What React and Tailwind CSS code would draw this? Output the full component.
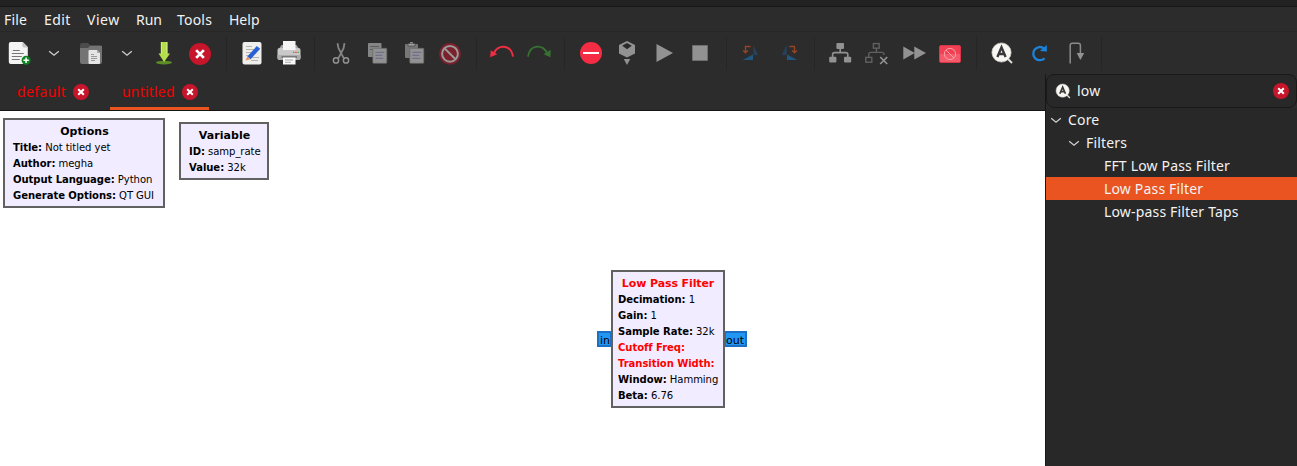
import React from "react";

function Icon({ children }) {
  return (
    <svg width="26" height="26" viewBox="0 0 26 26" fill="none" className="block shrink-0">
      {children}
    </svg>
  );
}

function Tool({ children }) {
  return <button className="flex h-full w-[36.5px] shrink-0 items-center justify-center">{children}</button>;
}

function Separator() {
  return (
    <div className="flex h-full w-[15.5px] shrink-0 items-center justify-center">
      <div className="h-[33px] w-px bg-[#262626]" />
    </div>
  );
}

function CloseBadge({ className }) {
  return (
    <svg viewBox="0 0 16 16" className={className}>
      <circle cx="8" cy="8" r="8" fill="#c7162b" />
      <path d="M5.2 5.2l5.6 5.6M10.8 5.2l-5.6 5.6" stroke="#fff" strokeWidth="2" />
    </svg>
  );
}

function Chevron({ className = "" }) {
  return (
    <svg width="12" height="8" viewBox="0 0 12 8" fill="none" className={className}>
      <path d="M1.2 2.2L6 6.2l4.8-4" stroke="#cfcfcf" strokeWidth="1.3" />
    </svg>
  );
}

function Magnifier({ className }) {
  return (
    <svg viewBox="0 0 26 26" fill="none" className={className}>
      <path d="M18 18l5 5" stroke="#deddda" strokeWidth="2" />
      <circle cx="12.5" cy="12.5" r="9.6" fill="#f8f7f3" stroke="#d0cfc4" strokeWidth=".7" />
      <path d="M8.4 17l4.1-9.6 4.1 9.6M10 14h5.2" stroke="#383838" strokeWidth="2.4" />
    </svg>
  );
}

const NewIcon = () => (
  <Icon>
    <g transform="translate(.8 0)">
      <path d="M5 2h12l5 5v15q0 2-2 2H5q-2 0-2-2V4q0-2 2-2z" fill="#f4f4f4" />
      <path d="M16.5 2v3.5q0 2 2 2H22z" fill="#c4c4c4" />
      <path d="M7 10.5h7M6 13.5h12M6 16.5h10M6 19.5h8" stroke="#777" />
      <circle cx="20.3" cy="20.3" r="4.5" fill="#0e8420" />
      <path d="M17.6 20.3H23M20.3 17.6V23" stroke="#fff" strokeWidth="1.5" />
    </g>
  </Icon>
);

const FolderIcon = () => (
  <Icon>
    <path d="M2 5q0-2 2-2h6l2 2h10q2 0 2 2v13H2z" fill="#4b4b4b" />
    <path d="M2 8h8l2-2h12v16q0 2-2 2H4q-2 0-2-2z" fill="#747474" />
    <path d="M11 10h8l3 3v10q0 1-1 1h-9.5q-1 0-1-1V11q0-1 1-1z" fill="#e5e5e5" />
    <path d="M19 10v3h3z" fill="#aaa" />
    <path d="M13 14.5h3M13 16.5h6M13 18.5h6M13 20.5h4" stroke="#999" />
  </Icon>
);

const SaveIcon = () => (
  <Icon>
    <ellipse cx="13" cy="22.6" rx="8" ry="1.8" fill="#5c8c24" />
    <path d="M9.8 2h6.6v11.5H19L13.1 22 7.5 13.5h2.3z" fill="#b4dd4b" />
    <path d="M10.5 2v12M15.9 2v12" stroke="#d3ee85" />
  </Icon>
);

const EditIcon = () => (
  <Icon>
    <rect x="3.5" y="2" width="19" height="22.5" rx="2" fill="#eeeeec" />
    <path d="M7 6.5h6M7 9.5h10M7 12.5h5M7 15.5h4M13 17.5h7M12 20.5h7" stroke="#b5b5a9" />
    <path d="M17.8 6l3.4 2.8-9.6 10.4-3.3-2.8z" fill="#2860d8" />
    <path d="M8.3 16.4l3.3 2.8-5.1 1.2z" fill="#e5955d" />
  </Icon>
);

const PrintIcon = () => (
  <Icon>
    <rect x="1.5" y="8" width="23" height="12" rx="2" fill="#c9c9c9" />
    <path d="M3.5 8h19l-2-3h-15z" fill="#a5a5a5" />
    <path d="M7 1h12.5v9H7z" fill="#f4f4f4" />
    <path d="M1.5 15h23v3q0 2-2 2h-19q-2 0-2-2z" fill="#adadad" />
    <path d="M5.5 17h15.5" stroke="#444" />
    <path d="M7 17.5h12.5v7H7z" fill="#fafafa" />
    <path d="M9 20h8M9 22.3h6" stroke="#aaa" />
    <path d="M17 12.3h1.4" stroke="#de5b3c" strokeWidth="1.3" />
    <path d="M19.3 12.3h1.4" stroke="#e83a3a" strokeWidth="1.3" />
    <path d="M21.6 12.3H23" stroke="#4aa947" strokeWidth="1.3" />
  </Icon>
);

const CutIcon = () => (
  <Icon>
    <path d="M9.5 3.2l1 5 5.2 10M16.5 3.2l-.9 5-5.2 10" stroke="#858585" strokeWidth="1.8" />
    <circle cx="8" cy="20.4" r="2.6" stroke="#929292" strokeWidth="1.5" />
    <circle cx="18" cy="20.4" r="2.6" stroke="#929292" strokeWidth="1.5" />
  </Icon>
);

const SheetLines = () => (
  <>
    <rect x="8.8" y="8.3" width="14" height="15" rx=".8" fill="#929292" stroke="#666" strokeWidth=".7" />
    <path d="M11.3 12.3h9M11.3 15.3h7M11.3 18.3h8" stroke="#68688e" />
  </>
);

const CopyIcon = () => (
  <Icon>
    <rect x="4" y="3" width="13.5" height="14" rx=".8" fill="#858585" />
    <path d="M6 6.5h9M6 9.5h5" stroke="#5d5d5d" />
    <SheetLines />
  </Icon>
);

const PasteIcon = () => (
  <Icon>
    <rect x="4" y="4" width="13" height="14" rx="1" fill="#777" />
    <path d="M7 3.5h7V6H7z" fill="#a0a0a0" stroke="#444" strokeWidth=".7" />
    <path d="M9 2.8h3" stroke="#aaa" />
    <SheetLines />
  </Icon>
);

const DeleteIcon = () => (
  <Icon>
    <circle cx="13" cy="13.8" r="10.8" fill="#7c202b" />
    <circle cx="13" cy="13.8" r="7.9" stroke="#999" strokeWidth="2" />
    <path d="M7.5 8.3l11 11" stroke="#999" strokeWidth="2" />
  </Icon>
);

const UndoIcon = () => (
  <Icon>
    <path d="M5.2 13C8 4.5 22 3.5 24 16.7" stroke="#ed2e43" strokeWidth="1.9" />
    <path d="M1.8 10.2l-.7 7 7.2-3z" fill="#ed2e43" />
  </Icon>
);

const RedoIcon = () => (
  <Icon>
    <path d="M20.8 13C18 4.5 4 3.5 2 16.7" stroke="#377231" strokeWidth="1.8" />
    <path d="M24.7 9.7l-.3 7.5-6.8-3z" fill="#377231" />
  </Icon>
);

const ErrorsIcon = () => (
  <Icon>
    <circle cx="13" cy="13" r="11" fill="#f42c44" />
    <path d="M5 13h16" stroke="#fff" strokeWidth="2" />
  </Icon>
);

const GenerateIcon = () => (
  <Icon>
    <path d="M13 1l8 4v8.5l-8 4-8-4V5z" fill="#929292" />
    <path d="M13 3l4.8 2.7L13 9.2 8.2 5.7z" fill="#292929" />
    <path d="M9.8 19h6.4L13 25z" fill="#929292" />
  </Icon>
);

const FlipIcon = ({ mirrored }) => (
  <Icon>
    <g transform={mirrored ? "translate(25 0) scale(-1 1)" : undefined}>
      <path d="M14.3 5v10h4.9z" fill="#27415b" />
      <path d="M14 14.5V20H3.7z" fill="#205781" />
      <path d="M11.7 6.5H6.5V12M4.2 10.4l2.3 2.4 2.3-2.4" stroke="#944326" strokeWidth="1.4" />
    </g>
  </Icon>
);

const TreeIcon = ({ disabled }) => (
  <Icon>
    {disabled ? (
      <g stroke="#606060" strokeWidth="1.4" transform="translate(-.8 0)">
        <rect x="10.2" y="3.6" width="5.8" height="4.6" />
        <rect x="2.6" y="17.4" width="6" height="4.8" />
        <path d="M13.2 8v4.5M5.6 17v-2.6q0-2 2-2h11.2q2 0 2 2V15" />
        <path d="M17 17l7 7M24 17l-7 7" stroke="#929292" strokeWidth="1.7" />
      </g>
    ) : (
      <g fill="#929292" transform="translate(-.8 0)">
        <rect x="9.2" y="3" width="7.6" height="6" rx="1" />
        <rect x="2" y="16.8" width="7.2" height="5.7" rx="1" />
        <rect x="16.8" y="16.8" width="7.2" height="5.7" rx="1" />
        <path d="M13 8v4.6M5.4 17v-2.4q0-2 2-2h11.2q2 0 2 2V17" stroke="#929292" strokeWidth="1.6" fill="none" />
      </g>
    )}
  </Icon>
);

const BypassIcon = () => (
  <Icon>
    <rect x="2.5" y="5.5" width="21" height="17" rx="1.5" fill="#f13f53" stroke="#d7374a" />
    <path d="M3 14h20v7q0 1-1 1H4q-1 0-1-1z" fill="#f45a6a" />
    <circle cx="13" cy="14" r="5.6" stroke="#f9a2aa" />
    <path d="M9 10l8 8" stroke="#f9a2aa" />
  </Icon>
);

const ReloadIcon = () => (
  <Icon>
    <path d="M18.6 18.2A6.6 6.6 0 1 1 17.8 8.3" stroke="#1d82da" strokeWidth="2.3" />
    <path d="M20.9 4.9v6.7l-7.1-.6z" fill="#1d82da" />
  </Icon>
);

const HierIcon = () => (
  <Icon>
    <path d="M8.2 23.5V5.5q0-2.2 2.2-2.2h5.8q2.2 0 2.2 2.2V14" stroke="#8b8b8b" strokeWidth="1.5" />
    <path d="M14.7 13h7.5l-3.8 7z" fill="#929292" />
  </Icon>
);

const groups = [
  [
    <NewIcon />,
    <Chevron />,
    <FolderIcon />,
    <Chevron />,
    <SaveIcon />,
    <CloseBadge className="mt-px size-[22px]" />,
  ],
  [<EditIcon />, <PrintIcon />],
  [<CutIcon />, <CopyIcon />, <PasteIcon />, <DeleteIcon />],
  [<UndoIcon />, <RedoIcon />],
  [
    <ErrorsIcon />,
    <GenerateIcon />,
    <Icon>
      <path d="M5.5 4v18l16.5-9z" fill="#929292" />
    </Icon>,
    <Icon>
      <path d="M5.5 5.5h15v15h-15z" fill="#929292" stroke="#747474" strokeWidth=".8" />
    </Icon>,
  ],
  [<FlipIcon />, <FlipIcon mirrored />],
  [
    <TreeIcon />,
    <TreeIcon disabled />,
    <Icon>
      <path d="M2.3 6.5v13l11-6.3v6.3L25 13 13.3 6.5v6.3z" fill="#929292" />
    </Icon>,
    <BypassIcon />,
  ],
  [<Magnifier className="size-[26px]" />, <ReloadIcon />, <HierIcon />],
];

const menus = [
  ["File", "w-10 tracking-[0.2px]"],
  ["Edit", "w-[43px] tracking-[0.4px]"],
  ["View", "w-[49px] tracking-[0.5px]"],
  ["Run", "w-[41px]"],
  ["Tools", "w-[52px] tracking-[0.2px]"],
  ["Help", "w-10"],
];

function Param({ name, value, error }) {
  return (
    <div className="h-4 whitespace-pre">
      <b className={error ? "text-[#f00]" : ""}>{name}:</b>
      {value && <span> {value}</span>}
    </div>
  );
}

function Block({ title, error, className, children }) {
  return (
    <div className={`absolute border-2 border-[#616161] bg-[#f1ecff] text-[10.05px] leading-4 tracking-[-0.06px] text-black ${className}`}>
      <div
        className={`h-4 text-center text-[11px] font-bold whitespace-nowrap ${error ? "tracking-[-0.1px] text-[#f00]" : "pl-px tracking-[0.05px]"}`}
      >
        {title}
      </div>
      {children}
    </div>
  );
}

export default function App() {
  return (
    <div className="flex h-[466px] w-[1297px] flex-col overflow-hidden bg-[#2c2c2c] font-['Noto_Sans',sans-serif] text-[14px] text-[#f2f2f2]">
      <div className="h-[7px] shrink-0 border-b border-[#171717] bg-[#222]" />
      <nav className="flex h-[25px] shrink-0 items-center border-b border-[#272727] pt-px pl-1">
        {menus.map(([label, cls]) => (
          <span key={label} className={`shrink-0 ${cls}`}>
            {label}
          </span>
        ))}
      </nav>
      <div className="flex min-h-0 flex-1">
        <div className="flex w-[1045px] shrink-0 flex-col">
          <div className="-ml-[0.4px] flex h-[42px] w-[1110px] shrink-0 items-center">
            {groups.map((group, g) => (
              <React.Fragment key={g}>
                {group.map((icon, i) => (
                  <Tool key={i}>{icon}</Tool>
                ))}
                <Separator />
              </React.Fragment>
            ))}
          </div>
          <div className="flex h-[37px] shrink-0 border-b border-[#151515] text-[#f20000]">
            <div className="flex w-[110px] items-center pb-px pl-[17px]">
              <span className="w-14 tracking-[0.4px] whitespace-nowrap">default</span>
              <CloseBadge className="size-4" />
            </div>
            <div className="flex w-[99px] items-center border-b-[3px] border-[#e95420] pt-0.5 pl-3">
              <span className="w-[60px] tracking-[0.2px] whitespace-nowrap">untitled</span>
              <CloseBadge className="size-4" />
            </div>
          </div>
          <main className="relative flex-1 overflow-hidden bg-white font-['DejaVu_Sans',sans-serif]">
            <Block title="Options" className="top-[7px] left-[3px] h-[90px] w-[162px] px-2 pt-1">
              <Param name="Title" value="Not titled yet" />
              <Param name="Author" value="megha" />
              <Param name="Output Language" value="Python" />
              <Param name="Generate Options" value="QT GUI" />
            </Block>
            <Block title="Variable" className="top-[11px] left-[179px] h-[58px] w-[90px] px-2 pt-1">
              <Param name="ID" value="samp_rate" />
              <Param name="Value" value="32k" />
            </Block>
            <div className="absolute top-[220px] left-[597px] h-4 w-[15px] border-2 border-[#1b6fc4] bg-[#2196f3] pl-px text-[11px] leading-[15px] text-black">in</div>
            <div className="absolute top-[220px] left-[724px] h-4 w-[23px] border-2 border-[#1b6fc4] bg-[#2196f3] text-[11px] leading-[15px] text-black">out</div>
            <Block title="Low Pass Filter" error className="top-[159px] left-[611px] h-[138px] w-[114px] px-[5px] pt-1">
              <Param name="Decimation" value="1" />
              <Param name="Gain" value="1" />
              <Param name="Sample Rate" value="32k" />
              <Param name="Cutoff Freq" error />
              <Param name="Transition Width" error />
              <Param name="Window" value="Hamming" />
              <Param name="Beta" value="6.76" />
            </Block>
          </main>
        </div>
        <aside className="z-10 mt-[42px] flex w-[252px] shrink-0 flex-col border-l border-[#171717] bg-[#282828] tracking-[0.17px]">
          <div className="bg-[#2c2c2c]">
            <div className="flex h-[34px] items-center rounded-lg border border-[#191919] bg-[#282828] pr-[7px] pl-[7px]">
              <Magnifier className="size-[18px]" />
              <span className="ml-[5px] flex-1 pb-0.5">low</span>
              <CloseBadge className="size-4" />
            </div>
          </div>
          <div className="flex h-[23px] items-center pl-1">
            <Chevron />
            <span className="ml-1.5">Core</span>
          </div>
          <div className="flex h-[23px] items-center pl-[22px]">
            <Chevron />
            <span className="ml-1.5">Filters</span>
          </div>
          <div className="flex h-[23px] items-center pl-[58px]">FFT Low Pass Filter</div>
          <div className="flex h-[23px] items-center bg-[#e95420] pl-[58px]">Low Pass Filter</div>
          <div className="flex h-[23px] items-center pl-[58px]">Low-pass Filter Taps</div>
        </aside>
      </div>
    </div>
  );
}
